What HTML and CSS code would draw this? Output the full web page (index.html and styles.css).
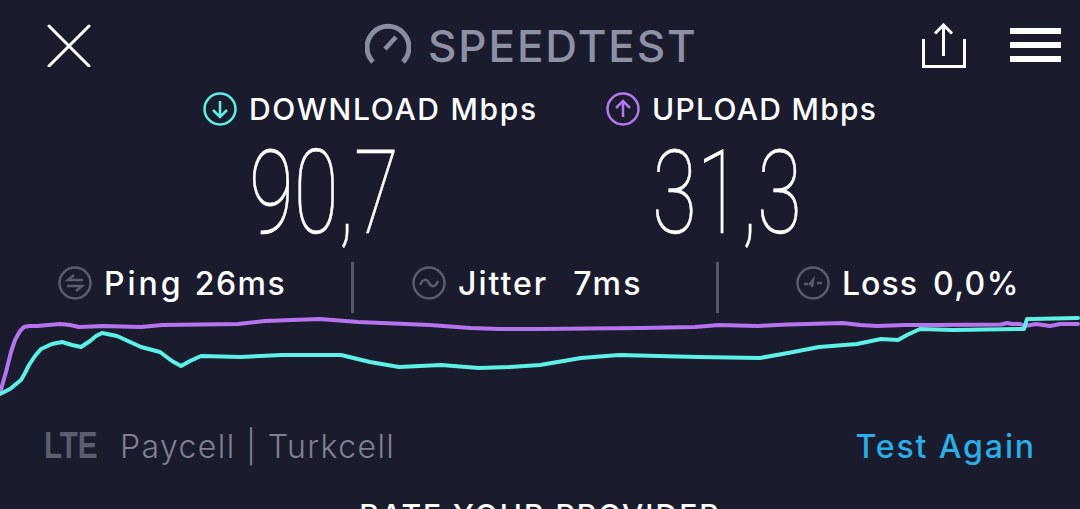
FILE: index.html
```html
<!DOCTYPE html>
<html lang="en">
<head>
<meta charset="utf-8">
<title>Speedtest</title>
<link rel="stylesheet" href="styles.css">
</head>
<body>
<div class="app">
  <header class="header">
    <svg class="close" width="44" height="44" viewBox="0 0 44 44"><path d="M2 3 L42 43 M42 3 L2 43"/></svg>
    <div class="brand">
      <svg class="gauge" width="46" height="42" viewBox="0 0 46 42"><path class="gauge-ring" d="M8 39 A21 21 0 1 1 38 39"/><path class="gauge-needle" d="M20 26 L31 14"/></svg>
      <span class="brand-name">SPEEDTEST</span>
    </div>
    <svg class="share" width="44" height="46" viewBox="0 0 44 46"><path d="M1.500 16 V43.500 H42.500 V16 M21.500 33 V2 M13 10.500 L21.500 2 L30 10.500"/></svg>
    <div class="menu"><span></span><span></span><span></span></div>
  </header>

  <section class="rates">
    <div class="rate rate-down">
      <div class="rate-label">
        <svg class="rate-icon" width="34" height="34" viewBox="0 0 34 34"><circle cx="17" cy="17" r="15.500"/><path d="M17 9 V25 M10 18 L17 25 L24 18"/></svg>
        <span>DOWNLOAD Mbps</span>
      </div>
      <div class="rate-value">90,7</div>
    </div>
    <div class="rate rate-up">
      <div class="rate-label">
        <svg class="rate-icon" width="34" height="34" viewBox="0 0 34 34"><circle cx="17" cy="17" r="15.500"/><path d="M17 25 V9 M10 16 L17 9 L24 16"/></svg>
        <span>UPLOAD Mbps</span>
      </div>
      <div class="rate-value">31,3</div>
    </div>
  </section>

  <section class="stats">
    <div class="stat stat-ping">
      <svg class="stat-icon" width="34" height="34" viewBox="0 0 34 34"><circle cx="17" cy="17" r="15.500"/><path class="glyph" d="M25 14 H10 L16 9 M9 20 H24 L18 25"/></svg>
      <span class="stat-name">Ping</span><span class="stat-num">26ms</span>
    </div>
    <i class="divider"></i>
    <div class="stat stat-jitter">
      <svg class="stat-icon" width="34" height="34" viewBox="0 0 34 34"><circle cx="17" cy="17" r="15.500"/><path class="glyph" d="M8 19 C11 12 15 13 17 17 C19 21 23 22 26 15"/></svg>
      <span class="stat-name">Jitter</span><span class="stat-num">7ms</span>
    </div>
    <i class="divider"></i>
    <div class="stat stat-loss">
      <svg class="stat-icon" width="34" height="34" viewBox="0 0 34 34"><circle cx="17" cy="17" r="15.500"/><path class="glyph" d="M8 18 H12 M13 19 L17 14 L16 21 M21 17 H26"/></svg>
      <span class="stat-name">Loss</span><span class="stat-num">0,0%</span>
    </div>
  </section>

  <svg class="chart" width="1080" height="90" viewBox="0 310 1080 90">
    <polyline class="line-up" points="0,393 6,372 11,352 15,340 20,331 24,327 29,326 38,326 48,325 60,324 70,325 79,327 103,326 141,327 162,325 238,324 265,321 320,319 358,322 430,325 470,328 499,329 540,329 640,328 695,327 719,325 757,326 788,324.500 843,323 860,325 877,326 905,325 936,325 1001,324.500 1007,323 1012,324 1020,324 1025,326 1036,324 1050,326 1060,324 1078,324"/>
    <polyline class="line-down" points="0,394 10,389 21,380 25,373 29,365 35,356 41,349 52,344 62,342 72,345 81,347 90,341 96,336 102,333 117,336 141,347 160,352 172,361 181,366 190,361 201,356 241,357 282,355 341,355 370,362 399,367 441,365 479,368 510,367 540,365 581,358 619,355 698,357 760,358 788,353 819,347 857,344 881,339 898,340 907,335 920,329 953,330 1024,329 1027,319 1032,319 1078,318"/>
  </svg>

  <footer class="footer">
    <span class="net">LTE</span>
    <span class="carrier">Paycell | Turkcell</span>
    <span class="again">Test Again</span>
  </footer>
  <div class="rate-provider">RATE YOUR PROVIDER</div>
</div>
</body>
</html>
```
FILE: styles.css
```css
* { box-sizing: border-box; }
html, body { margin: 0; height: 100%; overflow: hidden; background: #1a1c2e; }
.app { width: 1080px; height: 509px; overflow: hidden; background: #1a1c2e; color: #fff; font-family: Inter, "Liberation Sans", sans-serif; }

.header { display: flex; align-items: flex-start; height: 91px; padding: 23px 19px 0 47px; }
.close { fill: none; stroke: #fff; stroke-width: 3; stroke-linecap: round; }
.brand { display: flex; align-items: flex-start; margin-left: 274px; gap: 17px; }
.gauge-ring { fill: none; stroke: #8a8c9f; stroke-width: 5; }
.gauge-needle { fill: none; stroke: #8a8c9f; stroke-width: 4.500; }
.brand-name { margin-top: 2px; font-size: 44px; line-height: 42px; font-weight: 500; color: #8e90a5; letter-spacing: 1.900px; }
.share { margin-left: auto; fill: none; stroke: #fff; stroke-width: 3; }
.menu { display: flex; flex-direction: column; gap: 8px; width: 51px; margin: 5px 0 0 44px; }
.menu span { display: block; height: 6px; background: #fff; }

.rates { display: flex; height: 171px; padding-left: 203px; }
.rate { display: flex; flex-direction: column; }
.rate-down { width: 403px; }
.rate-label { display: flex; align-items: center; gap: 12px; height: 36px; font-size: 30px; letter-spacing: 1.700px; font-weight: 500; white-space: nowrap; }
.rate-up .rate-label { letter-spacing: 1.300px; }
.rate-icon { fill: none; stroke-width: 2.500; }
.rate-down .rate-icon { stroke: #5eeee4; }
.rate-up .rate-icon { stroke: #b678f0; }
.rate-value { margin: 16px 0 0 46px; font-family: Roboto, sans-serif; font-weight: 100; font-size: 117px; line-height: 100px; -webkit-text-stroke: 0.600px #fff; transform: scaleX(0.7); transform-origin: left center; white-space: nowrap; }

.stats { display: flex; align-items: center; height: 51px; }
.stat { display: flex; align-items: center; padding-bottom: 9px; font-size: 32px; letter-spacing: 1.500px; font-weight: 500; white-space: nowrap; }
.stat-icon { margin-right: 12px; fill: none; stroke: #5a5c6e; stroke-width: 2.500; }
.glyph { stroke-width: 2.500; }
.stat-ping { width: 351px; padding-left: 58px; }
.stat-jitter { width: 362px; padding-left: 58px; letter-spacing: 2.500px; }
.stat-loss { padding-left: 77px; }
.stat-name { margin-right: 13px; letter-spacing: 2px; }
.stat-ping .stat-name { letter-spacing: 3px; margin-right: 11px; }
.stat-loss .stat-name { letter-spacing: 1px; margin-right: 15px; }
.stat-jitter .stat-name { margin-right: 25px; }
.divider { display: block; width: 3px; height: 51px; background: #565869; }

.chart { display: block; margin-top: -3px; fill: none; stroke-width: 4; stroke-linejoin: round; stroke-linecap: round; }
.line-up { stroke: #b673ee; }
.line-down { stroke: #5df0e6; }

.footer { display: flex; align-items: center; height: 50px; margin-top: 21px; padding: 0 44px 0 44px; }
.net { font-family: "Liberation Sans", sans-serif; font-weight: 700; font-size: 36px; color: #5c5e70; transform: scaleX(0.82); transform-origin: left center; width: 76px; }
.carrier { font-size: 32px; font-weight: 300; letter-spacing: 1.400px; color: #7f8193; }
.again { margin-left: auto; font-size: 32px; font-weight: 500; letter-spacing: 1.900px; color: #2bade8; }
.rate-provider { margin-top: 26px; text-align: center; font-size: 30px; letter-spacing: 2px; font-weight: 500; }
```
